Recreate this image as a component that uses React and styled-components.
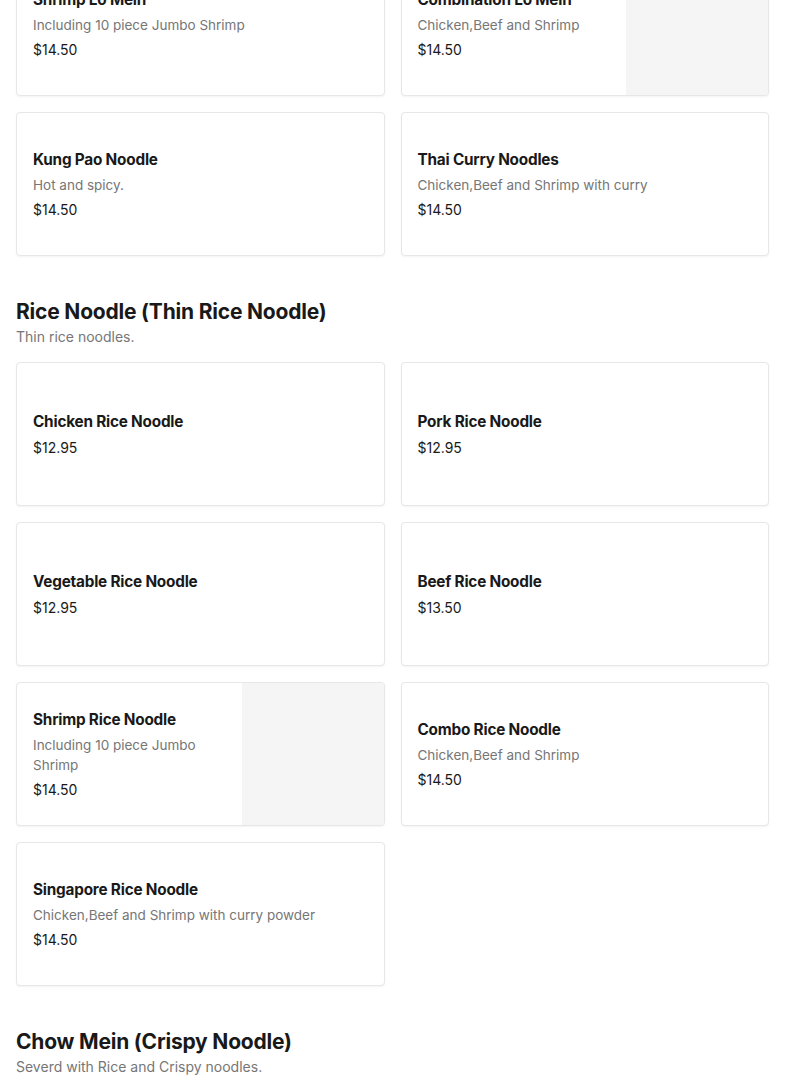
import React from "react";
import styled, { createGlobalStyle } from "styled-components";

const GlobalStyle = createGlobalStyle`
  * { box-sizing: border-box; }
  body {
    margin: 0;
    background: #ffffff;
    font-family: "Inter", "Lato", sans-serif;
    color: #191919;
  }
`;

const Page = styled.div`
  padding: 0 16px;
  margin-top: -48px;
`;

const Section = styled.section`
  & + & {
    margin-top: 41px;
  }
`;

const SectionTitle = styled.h2`
  margin: 0;
  font-size: 21px;
  line-height: 30px;
  font-weight: 700;
  letter-spacing: -0.2px;
  color: #191919;
`;

const SectionSub = styled.p`
  margin: 0 0 15px;
  font-size: 14px;
  line-height: 20px;
  color: #767676;
`;

const Grid = styled.div`
  display: grid;
  grid-template-columns: 1fr 1fr;
  gap: 16px;
`;

const Card = styled.div`
  display: flex;
  height: 144px;
  border: 1px solid #e7e7e7;
  border-radius: 4px;
  box-shadow: 0 1px 2px rgba(0, 0, 0, 0.05);
  background: #fff;
  overflow: hidden;
`;

const Body = styled.div`
  flex: 1;
  min-width: 0;
  display: flex;
  flex-direction: column;
  justify-content: center;
  padding: 0 16px;
`;

const Name = styled.div`
  font-size: 15.3px;
  line-height: 22px;
  font-weight: 700;
  letter-spacing: -0.2px;
  color: #191919;
`;

const Desc = styled.div`
  margin-top: 4px;
  font-size: 13.5px;
  line-height: 20px;
  color: #767676;
`;

const Price = styled.div`
  margin-top: 5px;
  font-size: 14px;
  line-height: 20px;
  color: #191919;
`;

const Thumb = styled.div`
  width: 142px;
  flex-shrink: 0;
  background: #f5f5f5;
`;

const sections = [
  {
    items: [
      { name: "Shrimp Lo Mein", desc: "Including 10 piece Jumbo Shrimp", price: "$14.50" },
      { name: "Combination Lo Mein", desc: "Chicken,Beef and Shrimp", price: "$14.50", thumb: true },
      { name: "Kung Pao Noodle", desc: "Hot and spicy.", price: "$14.50" },
      { name: "Thai Curry Noodles", desc: "Chicken,Beef and Shrimp with curry", price: "$14.50" },
    ],
  },
  {
    title: "Rice Noodle (Thin Rice Noodle)",
    sub: "Thin rice noodles.",
    items: [
      { name: "Chicken Rice Noodle", price: "$12.95" },
      { name: "Pork Rice Noodle", price: "$12.95" },
      { name: "Vegetable Rice Noodle", price: "$12.95" },
      { name: "Beef Rice Noodle", price: "$13.50" },
      { name: "Shrimp Rice Noodle", desc: "Including 10 piece Jumbo Shrimp", price: "$14.50", thumb: true },
      { name: "Combo Rice Noodle", desc: "Chicken,Beef and Shrimp", price: "$14.50" },
      { name: "Singapore Rice Noodle", desc: "Chicken,Beef and Shrimp with curry powder", price: "$14.50" },
    ],
  },
  {
    title: "Chow Mein (Crispy Noodle)",
    sub: "Severd with Rice and Crispy noodles.",
    items: [],
  },
];

function MenuCard({ item }) {
  return (
    <Card>
      <Body>
        <Name>{item.name}</Name>
        {item.desc && <Desc>{item.desc}</Desc>}
        <Price>{item.price}</Price>
      </Body>
      {item.thumb && <Thumb />}
    </Card>
  );
}

export default function App() {
  return (
    <>
      <GlobalStyle />
      <Page>
        {sections.map((s, i) => (
          <Section key={i}>
            {s.title && <SectionTitle>{s.title}</SectionTitle>}
            {s.sub && <SectionSub>{s.sub}</SectionSub>}
            {s.items.length > 0 && (
              <Grid>
                {s.items.map((item) => (
                  <MenuCard key={item.name} item={item} />
                ))}
              </Grid>
            )}
          </Section>
        ))}
      </Page>
    </>
  );
}
